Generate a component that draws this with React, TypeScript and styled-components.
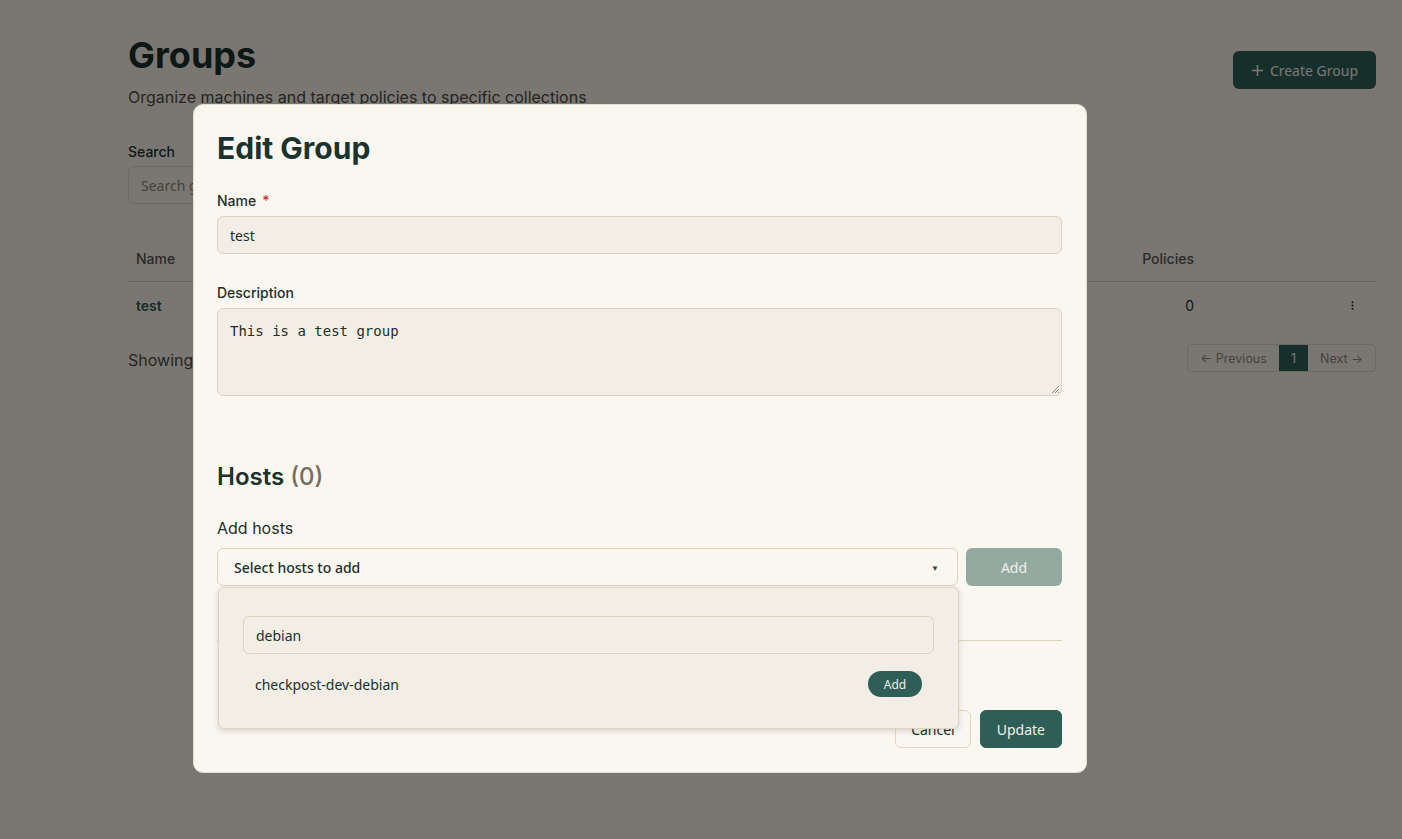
import React from "react";
import styled, { createGlobalStyle } from "styled-components";

const Global = createGlobalStyle`
  html, body { margin: 0; padding: 0; }
  body {
    background: #f4efe6;
    font-family: Inter, "Noto Sans", sans-serif;
    color: #1b302b;
    width: 1402px;
    height: 839px;
    overflow: hidden;
  }
  * { box-sizing: border-box; }
`;

const Page = styled.div`
  padding: 33px 26px 0 128px;
  height: 839px;
`;

const HeaderRow = styled.div`
  display: flex;
  justify-content: space-between;
  align-items: flex-start;
`;

const TitleBlock = styled.div`
  display: flex;
  flex-direction: column;
  gap: 10px;
`;

const PageTitle = styled.h1`
  margin: 0;
  font-family: Inter, sans-serif;
  font-size: 36px;
  line-height: 44px;
  font-weight: 700;
  color: #1a2f2a;
`;

const Subtitle = styled.p`
  margin: 0;
  font-size: 16px;
  line-height: 20px;
  color: #4a4a44;
`;

const PrimaryButton = styled.button`
  margin-top: 18px;
  height: 38px;
  padding: 0 18px;
  border: none;
  border-radius: 6px;
  background: #2e5e55;
  color: #f4efe6;
  font-family: "Noto Sans", sans-serif;
  font-size: 14px;
  display: flex;
  align-items: center;
  gap: 6px;
`;

const SearchBlock = styled.div`
  margin-top: 35px;
  display: flex;
  flex-direction: column;
  gap: 4px;
`;

const SmallLabel = styled.label`
  font-size: 14px;
  font-weight: 500;
  line-height: 20px;
  color: #1b302b;
`;

const SearchInput = styled.div`
  width: 320px;
  height: 38px;
  border: 1px solid #ddd3bf;
  border-radius: 6px;
  padding: 0 12px;
  display: flex;
  align-items: center;
  font-family: "Noto Sans", sans-serif;
  font-size: 14px;
  color: #8a857a;
`;

const Table = styled.div`
  margin-top: 32px;
  display: grid;
  grid-template-columns: 1fr 140px 174px;
`;

const HeadCell = styled.div<{ $right?: boolean }>`
  height: 46px;
  padding: 0 8px;
  display: flex;
  align-items: center;
  justify-content: ${(p) => (p.$right ? "flex-end" : "flex-start")};
  border-bottom: 1px solid #cfc7b7;
  font-size: 14px;
  font-weight: 500;
  color: #57524a;
`;

const Cell = styled.div<{ $right?: boolean; $bold?: boolean }>`
  height: 46px;
  padding: 0 8px;
  display: flex;
  align-items: center;
  justify-content: ${(p) => (p.$right ? "flex-end" : "flex-start")};
  font-size: 14px;
  font-weight: ${(p) => (p.$bold ? 600 : 400)};
  color: ${(p) => (p.$bold ? "#2a5a50" : "#1b302b")};
`;

const KebabCell = styled(Cell)`
  justify-content: flex-end;
  padding-right: 22px;
`;

const TableFooter = styled.div`
  margin-top: 16px;
  display: flex;
  justify-content: space-between;
  align-items: center;
`;

const Showing = styled.span`
  font-size: 16px;
  line-height: 24px;
  padding-top: 4px;
  color: #4a4a44;
`;

const Pager = styled.div`
  display: flex;
  height: 28px;
  border: 1px solid #ddd3bf;
  border-radius: 4px;
  overflow: hidden;
`;

const PageBtn = styled.div<{ $active?: boolean }>`
  padding: 0 12px;
  display: flex;
  align-items: center;
  font-size: 12.5px;
  color: ${(p) => (p.$active ? "#f4efe6" : "#8a857a")};
  background: ${(p) => (p.$active ? "#2e5e55" : "transparent")};
`;

const Overlay = styled.div`
  position: fixed;
  inset: 0;
  background: rgba(0, 0, 0, 0.5);
  padding: 104px 0 0 193px;
`;

const Modal = styled.div`
  width: 894px;
  height: 669px;
  background: #faf7f0;
  border-radius: 10px;
  border: 1px solid #e6dfd0;
  padding: 23px 24px 24px 23px;
  display: flex;
  flex-direction: column;
`;

const ModalTitle = styled.h2`
  margin: 0;
  font-family: Inter, sans-serif;
  font-size: 30px;
  line-height: 40px;
  font-weight: 700;
  color: #1b332d;
`;

const Field = styled.div<{ $mt: number }>`
  margin-top: ${(p) => p.$mt}px;
  display: flex;
  flex-direction: column;
  gap: 5px;
`;

const Required = styled.span`
  color: #c0392b;
  margin-left: 6px;
`;

const TextInput = styled.div`
  height: 38px;
  background: #f2eee6;
  border: 1px solid #ddd3bf;
  border-radius: 6px;
  padding: 0 12px;
  display: flex;
  align-items: center;
  font-family: "Noto Sans", sans-serif;
  font-size: 14px;
  color: #1b302b;
`;

const TextArea = styled.div`
  position: relative;
  height: 88px;
  background: #f2eee6;
  border: 1px solid #ddd3bf;
  border-radius: 6px;
  padding: 12px 12px;
  font-family: "DejaVu Sans Mono", monospace;
  font-size: 14px;
  line-height: 20px;
  color: #1b302b;
`;

const Grip = styled.svg`
  position: absolute;
  right: 1px;
  bottom: 1px;
`;

const HostsTitle = styled.h3`
  margin: 65px 0 0;
  font-family: Inter, sans-serif;
  font-size: 24px;
  line-height: 32px;
  font-weight: 600;
  color: #1b332d;
`;

const Count = styled.span`
  color: #766d5c;
  font-weight: 500;
`;

const AddLabel = styled.div`
  margin-top: 23px;
  font-size: 16px;
  line-height: 24px;
  color: #1b302b;
`;

const SelectRow = styled.div`
  margin-top: 8px;
  display: flex;
  gap: 8px;
`;

const SelectWrap = styled.div`
  position: relative;
  flex: 1;
`;

const SelectBox = styled.div`
  height: 38px;
  border: 1px solid #ddd3bf;
  border-radius: 6px;
  background: #faf7f0;
  padding: 0 18px 0 16px;
  display: flex;
  align-items: center;
  justify-content: space-between;
  font-family: "Noto Sans", sans-serif;
  font-size: 14px;
  font-weight: 500;
  color: #1b302b;
`;

const Caret = styled.span`
  font-size: 8px;
  color: #444;
`;

const Dropdown = styled.div`
  position: absolute;
  top: 39px;
  left: 1px;
  right: -1px;
  height: 142px;
  background: #f2eee6;
  border: 1px solid #ddd3bf;
  border-radius: 6px;
  box-shadow: 0 2px 6px rgba(0, 0, 0, 0.15);
  padding: 28px 24px 0 24px;
  z-index: 5;
`;

const DropSearch = styled(TextInput)`
  background: #f2eee6;
`;

const OptionRow = styled.div`
  margin-top: 17px;
  height: 26px;
  padding: 0 12px;
  display: flex;
  align-items: center;
  justify-content: space-between;
  font-family: "Noto Sans", sans-serif;
  font-size: 14px;
  color: #1b302b;
`;

const Pill = styled.button`
  height: 26px;
  width: 54px;
  border: none;
  border-radius: 13px;
  background: #2e5e55;
  color: #f4efe6;
  font-family: "Noto Sans", sans-serif;
  font-size: 12px;
`;

const DisabledAdd = styled.button`
  width: 96px;
  height: 38px;
  border: none;
  border-radius: 6px;
  background: #93aaa0;
  color: #eef1ec;
  font-family: "Noto Sans", sans-serif;
  font-size: 14px;
`;

const Divider = styled.hr`
  margin: 54px 0 0;
  border: none;
  border-top: 1px solid #ddd3bf;
`;

const Footer = styled.div`
  margin-top: auto;
  display: flex;
  justify-content: flex-end;
  gap: 9px;
`;

const FooterButton = styled.button<{ $primary?: boolean }>`
  height: 38px;
  padding: 0 ${(p) => (p.$primary ? "16px" : "15px")};
  border-radius: 6px;
  border: 1px solid ${(p) => (p.$primary ? "#2e5e55" : "#e2d6bd")};
  background: ${(p) => (p.$primary ? "#2e5e55" : "transparent")};
  color: ${(p) => (p.$primary ? "#f4efe6" : "#1b302b")};
  font-family: "Noto Sans", sans-serif;
  font-size: 14px;
`;

export default function App() {
  return (
    <>
      <Global />
      <Page>
        <HeaderRow>
          <TitleBlock>
            <PageTitle>Groups</PageTitle>
            <Subtitle>Organize machines and target policies to specific collections</Subtitle>
          </TitleBlock>
          <PrimaryButton>
            <svg width="13" height="13" viewBox="0 0 13 13">
              <path d="M6.5 1v11M1 6.5h11" stroke="currentColor" strokeWidth="1.5" />
            </svg>
            Create Group
          </PrimaryButton>
        </HeaderRow>
        <SearchBlock>
          <SmallLabel>Search</SmallLabel>
          <SearchInput>Search groups...</SearchInput>
        </SearchBlock>
        <Table>
          <HeadCell>Name</HeadCell>
          <HeadCell $right>Policies</HeadCell>
          <HeadCell />
          <Cell $bold>test</Cell>
          <Cell $right>0</Cell>
          <KebabCell>
            <svg width="3" height="9" viewBox="0 0 3 9">
              <circle cx="1.5" cy="1.2" r="1" fill="#1b302b" />
              <circle cx="1.5" cy="4.5" r="1" fill="#1b302b" />
              <circle cx="1.5" cy="7.8" r="1" fill="#1b302b" />
            </svg>
          </KebabCell>
        </Table>
        <TableFooter>
          <Showing>Showing 1 to 1 of 1 results</Showing>
          <Pager>
            <PageBtn>← Previous</PageBtn>
            <PageBtn $active>1</PageBtn>
            <PageBtn>Next →</PageBtn>
          </Pager>
        </TableFooter>
      </Page>
      <Overlay>
        <Modal>
          <ModalTitle>Edit Group</ModalTitle>
          <Field $mt={23}>
            <SmallLabel>
              Name<Required>*</Required>
            </SmallLabel>
            <TextInput>test</TextInput>
          </Field>
          <Field $mt={29}>
            <SmallLabel>Description</SmallLabel>
            <TextArea>
              This is a test group
              <Grip width="10" height="10" viewBox="0 0 10 10">
                <path d="M9 2L2 9M9 5L5 9M9 8L8 9" stroke="#888" strokeWidth="1" />
              </Grip>
            </TextArea>
          </Field>
          <HostsTitle>
            Hosts <Count>(0)</Count>
          </HostsTitle>
          <AddLabel>Add hosts</AddLabel>
          <SelectRow>
            <SelectWrap>
              <SelectBox>
                Select hosts to add
                <Caret>▼</Caret>
              </SelectBox>
              <Dropdown>
                <DropSearch>debian</DropSearch>
                <OptionRow>
                  checkpost-dev-debian
                  <Pill>Add</Pill>
                </OptionRow>
              </Dropdown>
            </SelectWrap>
            <DisabledAdd>Add</DisabledAdd>
          </SelectRow>
          <Divider />
          <Footer>
            <FooterButton>Cancel</FooterButton>
            <FooterButton $primary>Update</FooterButton>
          </Footer>
        </Modal>
      </Overlay>
    </>
  );
}
